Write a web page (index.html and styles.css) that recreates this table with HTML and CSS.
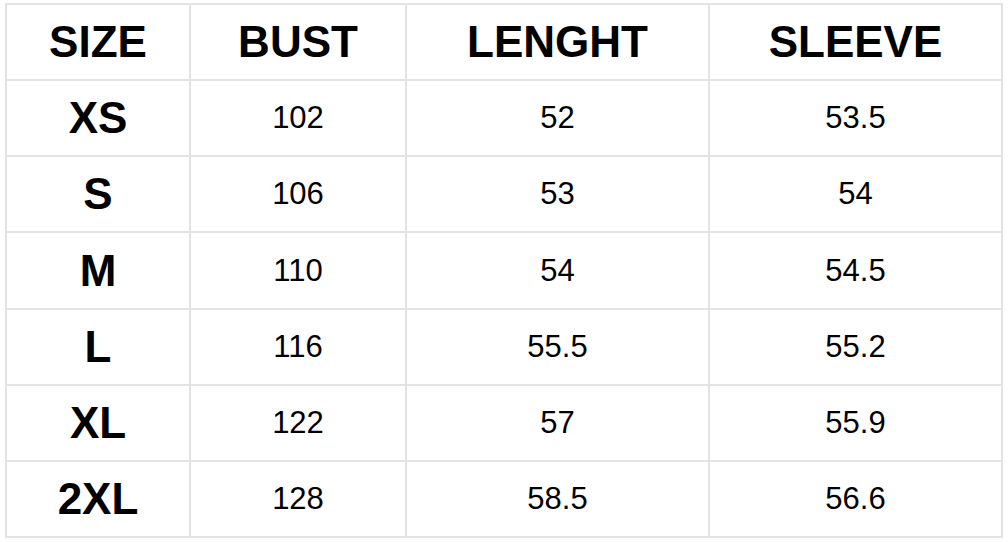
FILE: index.html
```html
<!DOCTYPE html>
<html>
<head>
<meta charset="utf-8">
<link rel="stylesheet" href="styles.css">
</head>
<body>
<div class="wrap">
  <div class="table">
    <div class="cell head">SIZE</div><div class="cell head">BUST</div><div class="cell head">LENGHT</div><div class="cell head">SLEEVE</div>
    <div class="cell size">XS</div><div class="cell">102</div><div class="cell">52</div><div class="cell">53.5</div>
    <div class="cell size">S</div><div class="cell">106</div><div class="cell">53</div><div class="cell">54</div>
    <div class="cell size">M</div><div class="cell">110</div><div class="cell">54</div><div class="cell">54.5</div>
    <div class="cell size">L</div><div class="cell">116</div><div class="cell">55.5</div><div class="cell">55.2</div>
    <div class="cell size">XL</div><div class="cell">122</div><div class="cell">57</div><div class="cell">55.9</div>
    <div class="cell size">2XL</div><div class="cell">128</div><div class="cell">58.5</div><div class="cell">56.6</div>
  </div>
</div>
</body>
</html>
```
FILE: styles.css
```css
html, body {
  margin: 0;
  padding: 0;
  background: #fff;
}
.wrap {
  padding: 3px 0 0 5px;
}
.table {
  display: grid;
  grid-template-columns: 182px 214px 301px 291px;
  grid-template-rows: 74px 74px 74px 75px 74px 74px 74px;
  gap: 2px;
  padding: 2px;
  background: #e3e3e3;
  width: max-content;
}
.cell {
  background: #fff;
  display: flex;
  align-items: center;
  justify-content: center;
  font-family: "Liberation Sans", Arial, sans-serif;
  font-size: 31px;
  color: #000;
}
.head, .size {
  font-size: 44px;
  font-weight: bold;
}
```
